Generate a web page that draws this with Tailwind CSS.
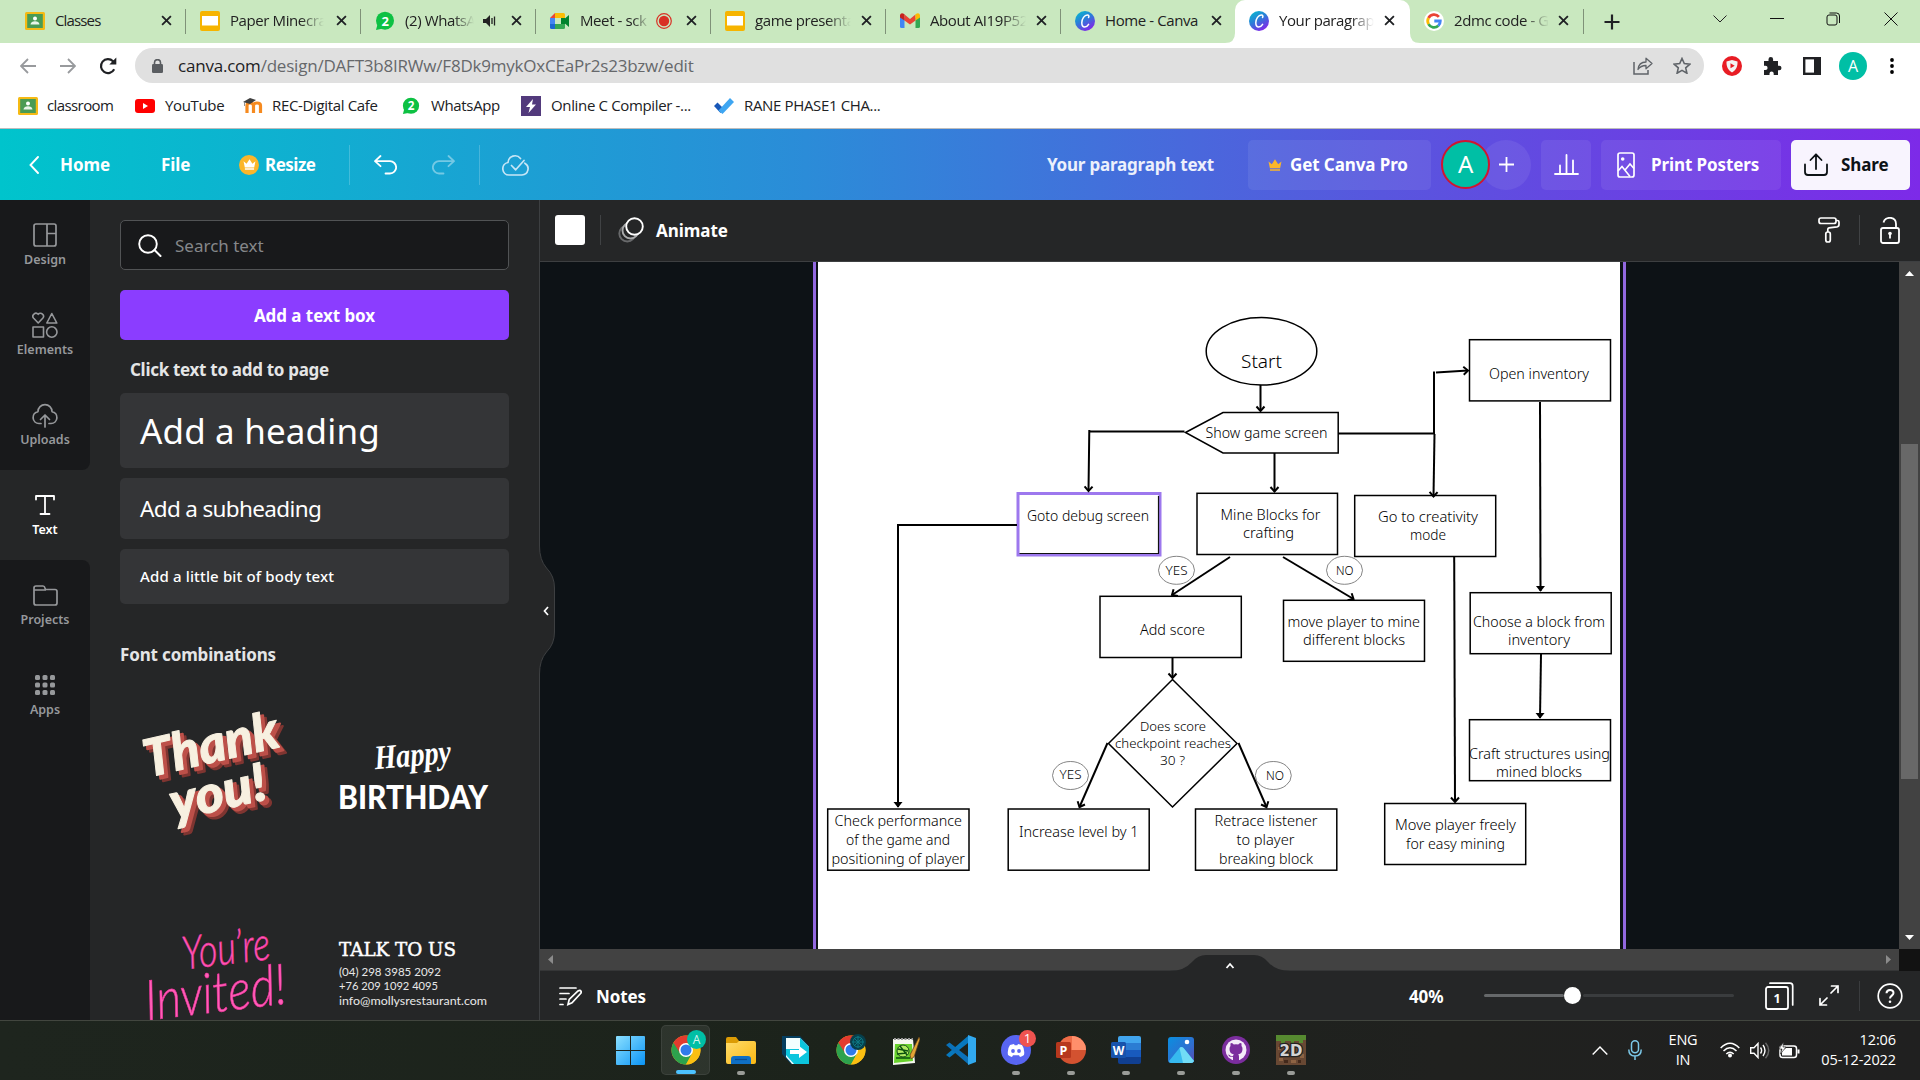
<!DOCTYPE html>
<html lang="en">
<head>
<meta charset="utf-8">
<title>Your paragraph text - Canva</title>
<script src="https://cdn.jsdelivr.net/npm/@tailwindcss/browser@4"></script>
</head>
<body class="w-[1920px] h-[1080px] overflow-hidden flex flex-col bg-[#0d1216] font-['Noto_Sans',sans-serif]">

<!-- Shared symbols -->
<svg class="absolute size-0">
  <defs>
    <linearGradient id="gCanva" x1="0" y1="0" x2="0.6" y2="1"><stop offset="0" stop-color="#00c4cc"/><stop offset=".5" stop-color="#2a7fd8"/><stop offset="1" stop-color="#7d2ae8"/></linearGradient>
    <linearGradient id="gWin" x1="0" y1="0" x2="1" y2="1"><stop offset="0" stop-color="#8be0ff"/><stop offset="1" stop-color="#0a94f5"/></linearGradient>
    <linearGradient id="gFold" x1="0" y1="0" x2="1" y2="1"><stop offset="0" stop-color="#ffdc6b"/><stop offset="1" stop-color="#fbb812"/></linearGradient>
    <linearGradient id="gPhoto" x1="0" y1="0" x2="1" y2="1"><stop offset="0" stop-color="#0a8fe0"/><stop offset=".6" stop-color="#2f6fd0"/><stop offset="1" stop-color="#5b48b0"/></linearGradient>
    <symbol id="close" viewBox="0 0 12 12"><path d="M1.2 1.2l9.600 9.600M10.800 1.200l-9.600 9.600" stroke="#1f2124" stroke-width="2"/></symbol>
    <symbol id="classroom" viewBox="0 0 20 20"><rect width="20" height="18" y="1" rx="1.500" fill="#f5ba14"/><rect x="2.200" y="3" width="15.600" height="14" fill="#4a9b54"/><circle cx="10" cy="7.500" r="2" fill="#fff"/><path d="M5.500 13.500c0-4.500 9-4.500 9 0z" fill="#e8f5e9"/></symbol>
    <symbol id="slides" viewBox="0 0 20 20"><rect width="20" height="20" rx="2" fill="#f6b400"/><rect x="2" y="5" width="16" height="9.500" fill="#fff"/></symbol>
    <symbol id="whatsapp" viewBox="0 0 20 20"><circle cx="10" cy="9.700" r="9" fill="#0dc143"/><path d="M1 19l1.600-6 4.400 4.700z" fill="#0dc143"/><text x="10" y="14.600" text-anchor="middle" font-family="Noto Sans" font-weight="700" font-size="13" fill="#fff">2</text></symbol>
    <symbol id="canva" viewBox="0 0 20 20"><circle cx="10" cy="10" r="10" fill="url(#gCanva)"/><path d="M13.500 6.500c.8-1.200.4-2.600-1.200-2.600C9.500 3.900 6.800 8 6.800 11.800c0 2.700 1.200 4.200 2.900 4.200 1.600 0 3-1.200 3.900-2.700" fill="none" stroke="#fff" stroke-width="1.500" stroke-linecap="round"/></symbol>
    <symbol id="crown" viewBox="0 0 14 12"><path d="M.5 2.500l3.300 2.800L7 .3l3.200 5 3.300-2.800-1.400 6.800H1.900zM2 10.200h10v1.500H2z" fill="currentColor"/></symbol>
    <symbol id="chrome" viewBox="0 0 30 30"><circle cx="15" cy="15" r="14.500" fill="#fbbf12"/><path d="M15 15L2.440 7.750A14.500 14.500 0 0 0 15 29.500l6.300-11z" fill="#2da24d"/><path d="M15 8.300h12.900A14.500 14.500 0 0 0 2.440 7.750L9.200 18.300z" fill="#e33b2e"/><path d="M27.900 8.300A14.500 14.500 0 0 1 15 29.500l6-11z" fill="#fbbf12"/><circle cx="15" cy="15" r="7" fill="#fff"/><circle cx="15" cy="15" r="5.500" fill="#2f7bea"/></symbol>
  </defs>
</svg>

<!-- Tab strip -->
<div class="h-[43px] shrink-0 bg-[#c9e8bf] flex items-stretch pl-[11px] [&>div]:pb-[2px] font-['Open_Sans',sans-serif] text-[15px] tracking-[-0.4px] text-[#222]">
  <div class="w-[175px] flex items-center pl-[14px] relative"><svg class="size-5"><use href="#classroom"/></svg><span class="ml-[10px] w-[94px] whitespace-nowrap tracking-[-0.85px]">Classes</span><svg class="ml-[12px] size-[11px]"><use href="#close"/></svg><i class="absolute right-0 top-[9px] w-px h-[25px] bg-[#7f9178]"></i></div>
  <div class="w-[175px] flex items-center pl-[14px] relative"><svg class="size-5"><use href="#slides"/></svg><span class="ml-[10px] w-[94px] whitespace-nowrap [mask-image:linear-gradient(to_right,black_75%,transparent)]">Paper Minecra</span><svg class="ml-[12px] size-[11px]"><use href="#close"/></svg><i class="absolute right-0 top-[9px] w-px h-[25px] bg-[#7f9178]"></i></div>
  <div class="w-[175px] flex items-center pl-[14px] relative"><svg class="size-5"><use href="#whatsapp"/></svg><span class="ml-[10px] w-[69px] whitespace-nowrap [mask-image:linear-gradient(to_right,black_70%,transparent)]">(2) WhatsA</span>
    <svg class="ml-[9px] w-[14px] h-[12px]" viewBox="0 0 14 12"><path d="M0 4h3l4-4v12L3 8H0z" fill="#222"/><path d="M9 3v6M11.500 1.500v9" stroke="#222" stroke-width="1.300"/></svg>
    <svg class="ml-[14px] size-[11px]"><use href="#close"/></svg><i class="absolute right-0 top-[9px] w-px h-[25px] bg-[#7f9178]"></i></div>
  <div class="w-[175px] flex items-center pl-[14px] relative"><svg class="w-5 h-[16px]" viewBox="0 0 20 16"><path d="M5 0v5H0z" fill="#ea4335"/><path d="M0 5h5v6H0z" fill="#4285f4"/><path d="M0 11h5v5H1.500Q0 16 0 14.500z" fill="#1967d2"/><path d="M5 0h8.500Q15 0 15 1.500V5H5z" fill="#fbbc04"/><path d="M5 11h10v3.500q0 1.500-1.500 1.500H5z" fill="#34a853"/><path d="M11 5h4v6h-4V8zM12 8l7-6v12z" fill="#00832d"/></svg><span class="ml-[10px] w-[70px] whitespace-nowrap [mask-image:linear-gradient(to_right,black_75%,transparent)]">Meet - sck</span>
    <svg class="ml-[6px] size-4" viewBox="0 0 16 16"><circle cx="8" cy="8" r="7.300" fill="none" stroke="#d93025" stroke-width="1.200"/><circle cx="8" cy="8" r="5.200" fill="#d93025"/></svg>
    <svg class="ml-[14px] size-[11px]"><use href="#close"/></svg><i class="absolute right-0 top-[9px] w-px h-[25px] bg-[#7f9178]"></i></div>
  <div class="w-[175px] flex items-center pl-[14px] relative"><svg class="size-5"><use href="#slides"/></svg><span class="ml-[10px] w-[96px] whitespace-nowrap [mask-image:linear-gradient(to_right,black_75%,transparent)]">game presenta</span><svg class="ml-[10px] size-[11px]"><use href="#close"/></svg><i class="absolute right-0 top-[9px] w-px h-[25px] bg-[#7f9178]"></i></div>
  <div class="w-[175px] flex items-center pl-[14px] relative"><svg class="w-5 h-[15px]" viewBox="0 0 20 15"><path d="M0 2v11.500Q0 15 1.500 15H4.500V5z" fill="#4285f4"/><path d="M20 2v11.500q0 1.500-1.500 1.500H15.500V5z" fill="#34a853"/><path d="M4.500 1.500L10 6l5.500-4.500v6L10 11.500 4.500 7.500z" fill="#ea4335"/><path d="M0 2Q1-1 4.500 1.300v6.200L0 4.500z" fill="#c5221f"/><path d="M20 2Q19-1 15.500 1.300v6.200L20 4.500z" fill="#fbbc04"/></svg><span class="ml-[10px] w-[96px] whitespace-nowrap [mask-image:linear-gradient(to_right,black_75%,transparent)]">About AI19P52</span><svg class="ml-[10px] size-[11px]"><use href="#close"/></svg><i class="absolute right-0 top-[9px] w-px h-[25px] bg-[#7f9178]"></i></div>
  <div class="w-[175px] flex items-center pl-[14px]"><svg class="size-5"><use href="#canva"/></svg><span class="ml-[10px] w-[96px] whitespace-nowrap">Home - Canva</span><svg class="ml-[10px] size-[11px]"><use href="#close"/></svg></div>
  <div class="w-[175px] flex items-center pl-[14px] relative bg-white rounded-t-[10px] -ml-px mr-px">
    <svg class="absolute -left-[10px] bottom-0 size-[10px]" viewBox="0 0 10 10"><path d="M10 0v10H0Q10 10 10 0z" fill="#fff"/></svg>
    <svg class="absolute -right-[10px] bottom-0 size-[10px]" viewBox="0 0 10 10"><path d="M0 0v10h10Q0 10 0 0z" fill="#fff"/></svg>
    <svg class="size-5"><use href="#canva"/></svg><span class="ml-[10px] w-[95px] whitespace-nowrap [mask-image:linear-gradient(to_right,black_75%,transparent)]">Your paragrap</span><svg class="ml-[10px] size-[11px]"><use href="#close"/></svg></div>
  <div class="w-[173px] flex items-center pl-[13px] relative"><svg class="size-5" viewBox="0 0 20 20"><circle cx="10" cy="10" r="10" fill="#fff"/><g fill="none" stroke-width="2.800"><path d="M14.900 5.800A6.300 6.300 0 0 0 4.500 7" stroke="#ea4335"/><path d="M4.500 7a6.300 6.300 0 0 0 0 6.100" stroke="#fbbc05"/><path d="M4.500 13.100a6.300 6.300 0 0 0 9.800 1.600" stroke="#34a853"/><path d="M14.300 14.700A6.300 6.300 0 0 0 16.300 10H10.300" stroke="#4285f4"/></g></svg><span class="ml-[10px] w-[95px] whitespace-nowrap [mask-image:linear-gradient(to_right,black_75%,transparent)]">2dmc code - G</span><svg class="ml-[9px] size-[11px]"><use href="#close"/></svg><i class="absolute right-0 top-[9px] w-px h-[25px] bg-[#7f9178]"></i></div>
  <svg class="ml-[20px] w-4 self-center h-4" viewBox="0 0 16 16"><path d="M8 .5v15M.5 8h15" stroke="#202124" stroke-width="2.200"/></svg>
  <svg class="ml-[93px] w-[14px] h-[8px] mt-[15px]" viewBox="0 0 14 8"><path d="M.5.5L7 7l6.500-6.500" fill="none" stroke="#222"/></svg>
  <svg class="ml-[43px] w-[14px] h-[2px] mt-[18px]"><path d="M0 .5h14" stroke="#111"/></svg>
  <svg class="ml-[42px] w-[15px] h-[14px] mt-[12px]" viewBox="0 0 15 14"><rect x="1" y="3" width="10" height="10" rx="2" fill="none" stroke="#111"/><path d="M3.500 1h7q3 0 3 3v7" fill="none" stroke="#111"/></svg>
  <svg class="ml-[43px] w-[14px] h-[14px] mt-[12px]" viewBox="0 0 14 14"><path d="M.5.5l13 13M13.500.5l-13 13" stroke="#111"/></svg>
</div>

<!-- Address row -->
<div class="h-[45px] shrink-0 bg-white flex items-center pl-5 font-['Open_Sans',sans-serif]">
  <svg class="w-4 h-4" viewBox="0 0 16 16"><path d="M16 8H1.500M8 1L1 8l7 7" fill="none" stroke="#989a9d" stroke-width="1.800"/></svg>
  <svg class="ml-6 w-4 h-4" viewBox="0 0 16 16"><path d="M0 8h14.500M8 1l7 7-7 7" fill="none" stroke="#989a9d" stroke-width="1.800"/></svg>
  <svg class="ml-[23px] w-[18px] h-[18px]" viewBox="0 0 18 18"><path d="M15.200 12.300A7 7 0 1 1 14 4.200l2 2" fill="none" stroke="#202124" stroke-width="2.200"/><path d="M17.300.6v7h-7z" fill="#202124"/></svg>
  <div class="ml-[18px] w-[1569px] h-[35px] rounded-full bg-[#e0e0e0] flex items-center pl-[17px]">
    <svg class="w-[11px] h-[14px]" viewBox="0 0 11 14"><rect y="5" width="11" height="9" rx="1.300" fill="#5a5d61"/><path d="M2.500 6V3.600a3 3 0 0 1 6 0V6" fill="none" stroke="#5a5d61" stroke-width="1.600"/></svg>
    <span class="ml-[15px] w-[1455px] text-[17px] tracking-[-0.21px] whitespace-nowrap text-[#66686b]"><span class="text-[#202124]">canva.com</span>/design/DAFT3b8IRWw/F8Dk9mykOxCEaPr2s23bzw/edit</span>
    <svg class="w-5 h-[18px] shrink-0" viewBox="0 0 20 18"><path d="M1 5v12h14v-4" fill="none" stroke="#5f6368" stroke-width="1.500"/><path d="M5 12.500c.5-5 3.500-7.500 8-7.500V1.200l6 5.300-6 5.300V8.500c-3.500 0-6 1-8 4z" fill="none" stroke="#5f6368" stroke-width="1.300" stroke-linejoin="round"/></svg>
    <svg class="ml-5 w-[18px] h-[17px] shrink-0" viewBox="0 0 18 17"><path d="M9 1.500l2.300 5.100 5.600.5-4.200 3.700 1.200 5.400L9 13.400l-4.900 2.800 1.200-5.400L1.100 7.100l5.600-.5z" fill="none" stroke="#5f6368" stroke-width="1.600"/></svg>
  </div>
  <svg class="ml-[18px] size-5" viewBox="0 0 20 20"><circle cx="10" cy="10" r="10" fill="#e81c24"/><path d="M10 4l5.500 1.500c.3 5-1.500 8.500-5.500 11-4-2.500-5.800-6-5.500-11z" fill="#f3f3f3"/><path d="M8.500 7.300l4.200 2.500-4.200 2.500z" fill="#e81c24"/></svg>
  <svg class="ml-[21px] w-[19px] h-[19px]" viewBox="0 0 19 19"><path d="M1 5h4.500V3.200a2.300 2.300 0 0 1 4.600 0V5H15v4.700h1.200a2.300 2.300 0 0 1 0 4.600H15V19h-4.300v-1.500a2 2 0 0 0-4.200 0V19H1v-5h1.500a2 2 0 0 0 0-4.200H1z" fill="#202124"/></svg>
  <svg class="ml-[21px] w-[18px] h-[18px]" viewBox="0 0 18 18"><rect x="1.200" y="1.200" width="15.600" height="15.600" fill="#fff" stroke="#202124" stroke-width="2.400"/><path d="M11 0h7v18h-7z" fill="#202124"/></svg>
  <span class="ml-[18px] size-[28px] rounded-full bg-[#00bfa5] text-white text-[16px] flex items-center justify-center">A</span>
  <svg class="ml-[23px] w-1 h-4" viewBox="0 0 4 16"><circle cx="2" cy="2" r="1.900"/><circle cx="2" cy="8" r="1.900"/><circle cx="2" cy="14" r="1.900"/></svg>
</div>

<!-- Bookmarks -->
<div class="h-[41px] shrink-0 bg-white border-b border-[#bdbdbd] flex items-center pl-[18px] pb-[5px] font-['Open_Sans',sans-serif] text-[15px] tracking-[-0.35px] text-[#202124] whitespace-nowrap">
  <svg class="size-5"><use href="#classroom"/></svg><span class="ml-[9px] w-[88px] tracking-[-0.6px]">classroom</span>
  <svg class="w-5 h-[14px]" viewBox="0 0 20 14"><rect width="20" height="14" rx="3" fill="#f00"/><path d="M8 4l5 3-5 3z" fill="#fff"/></svg><span class="ml-[10px] w-[78px]">YouTube</span>
  <svg class="size-5" viewBox="0 0 20 20"><path d="M4 17V9.500q0-2.500 3-2.500t3.500 2.500V17M10.500 17V9.500q0-2.500 3.500-2.500t3.500 2.500V17" fill="none" stroke="#f68a1f" stroke-width="3.200"/><path d="M0 6l7-4 6 2-6 4z" fill="#3f3f3f"/><path d="M1.500 6v4" stroke="#777" stroke-width=".8"/></svg><span class="ml-[9px] w-[130px]">REC-Digital Cafe</span>
  <svg class="size-[18px]" viewBox="0 0 20 20"><use href="#whatsapp"/></svg><span class="ml-[11px] w-[90px]">WhatsApp</span>
  <svg class="size-5" viewBox="0 0 20 20"><path d="M0 0h20v20H0z" fill="#523a7c"/><path d="M12 3L5 11h4l-1.500 6L15 8.500h-4z" fill="#fff"/></svg><span class="ml-[10px] w-[163px]">Online C Compiler -...</span>
  <svg class="w-5 h-4" viewBox="0 0 20 16"><path d="M0 8l3.500-3.500 6 6L6.500 15z" fill="#1857b8"/><path d="M4.500 12.500L16 0l4 4L8.500 16z" fill="#3ea6f2"/></svg><span class="ml-[10px]">RANE PHASE1 CHA...</span>
</div>

<!-- Editor header -->
<div class="h-[71px] shrink-0 bg-[linear-gradient(90deg,#00c4cc,#2b8cd8_42%,#5856de_72%,#7d2ae8)] flex items-center pl-[29px] text-white font-bold text-[17px] tracking-[-0.1px] whitespace-nowrap [&_span]:pt-px">
  <svg class="w-[10px] h-[18px]" viewBox="0 0 10 18"><path d="M9 1L1.500 9 9 17" fill="none" stroke="#fff" stroke-width="1.900" stroke-linecap="round"/></svg>
  <span class="ml-[21px] w-[101px]">Home</span>
  <span class="w-[78px]">File</span>
  <i class="size-5 rounded-full bg-[#fbb62a] flex items-center justify-center"><svg class="w-[13px] h-[11px]"><use href="#crown"/></svg></i>
  <span class="ml-[6px] w-[83px] tracking-[-0.5px]">Resize</span>
  <i class="w-px h-10 bg-white/20 ml-px"></i>
  <svg class="ml-[24px] w-[23px] h-[20px]" viewBox="0 0 23 20"><path d="M6.500 1L1 6.200l5.500 5M1.500 6.200H16a6 6 0 0 1 0 12.300h-4.500" fill="none" stroke="#fff" stroke-width="1.800" stroke-linecap="round" stroke-linejoin="round"/></svg>
  <svg class="ml-[35px] w-[23px] h-[20px] opacity-40" viewBox="0 0 23 20"><path d="M16.500 1L22 6.200l-5.500 5M21.500 6.200H7a6 6 0 0 0 0 12.300h4.500" fill="none" stroke="#fff" stroke-width="1.800" stroke-linecap="round" stroke-linejoin="round"/></svg>
  <i class="ml-[24px] w-px h-10 bg-white/20"></i>
  <svg class="ml-[22px] w-[27px] h-[22px]" viewBox="0 0 27 22"><path d="M18.500 4.500A7 7 0 0 0 6 8.500a6.300 6.300 0 0 0 1 12.500h13a6.300 6.300 0 0 0 2.800-11.800M9.500 11.500l4.200 4.300L22 6.500" fill="none" stroke="#c7e6f6" stroke-width="1.700" stroke-linecap="round" stroke-linejoin="round"/></svg>
  <span class="ml-[518px] w-[201px] tracking-[-0.2px] text-white/90">Your paragraph text</span>
  <div class="w-[183px] h-[50px] rounded-[5px] bg-white/7 flex items-center pl-[20px]"><svg class="w-[14px] h-[12px] text-[#fbb62a]"><use href="#crown"/></svg><span class="ml-[8px] tracking-[-0.1px]">Get Canva Pro</span></div>
  <div class="ml-[10px] w-[90px] flex">
    <b class="relative z-10 size-[49px] rounded-full border-2 border-[#d0152f] bg-[#00bfa5] text-[24px] font-normal flex items-center justify-center">A</b>
    <i class="-ml-[9px] size-[50px] rounded-full bg-white/7 flex items-center justify-center"><svg class="w-[15px] h-[15px]" viewBox="0 0 15 15"><path d="M7.500 0v15M0 7.500h15" stroke="#fff" stroke-width="1.800"/></svg></i>
  </div>
  <div class="ml-[10px] w-[50px] h-[50px] rounded-[5px] bg-white/7 flex items-center justify-center"><svg class="w-[25px] h-[21px]" viewBox="0 0 25 21"><path d="M1 20h23M6 19v-7.500M12.500 19V1M19 19V6.500" fill="none" stroke="#fff" stroke-width="1.800" stroke-linecap="round"/></svg></div>
  <div class="ml-[10px] w-[180px] h-[50px] rounded-[5px] bg-white/7 flex items-center pl-[16px]"><svg class="w-[18px] h-[26px]" viewBox="0 0 18 26"><rect x="1" y="1" width="16" height="24" rx="2" fill="none" stroke="#fff" stroke-width="1.700"/><circle cx="5.700" cy="7" r="1.800" fill="#fff"/><path d="M1 19l4-4.500 8 10M8 18l5-6 4 4.500" fill="none" stroke="#fff" stroke-width="1.600"/></svg><span class="ml-[16px] tracking-[-0.1px]">Print Posters</span></div>
  <div class="ml-[10px] w-[119px] h-[50px] rounded-[5px] bg-[#f8f4fe] text-[#0d1216] flex items-center pl-[13px]"><svg class="w-[24px] h-[23px]" viewBox="0 0 24 23"><path d="M1 11.500V19q0 3 3 3h16q3 0 3-3v-7.500M12 16V1.500M6.500 7L12 1.300 17.500 7" fill="none" stroke="#0d1216" stroke-width="1.800" stroke-linecap="round" stroke-linejoin="round"/></svg><span class="ml-[13px]">Share</span></div>
</div>

<!-- Editor body -->
<div class="h-[820px] shrink-0 flex relative">
  <!-- Rail -->
  <div class="w-[90px] bg-[#252627] flex flex-col text-[12.5px] font-semibold text-[#96989b] text-center">
    <div class="h-[270px] bg-[#18191b] rounded-br-[8px] flex flex-col">
      <div class="h-[90px] pt-[23px] flex flex-col items-center"><svg class="w-[24px] h-[24px]" viewBox="0 0 24 24"><rect x="1" y="1" width="22" height="22" rx="2" fill="none" stroke="#96989b" stroke-width="1.700"/><path d="M14 1v22M14 10.500h9" stroke="#96989b" stroke-width="1.700"/></svg><span class="mt-[4px]">Design</span></div>
      <div class="h-[90px] pt-[22px] flex flex-col items-center"><svg class="w-[26px] h-[26px]" viewBox="0 0 26 26"><g fill="none" stroke="#96989b" stroke-width="1.600" stroke-linejoin="round"><path d="M6.200 11L1.700 6.300a3 3 0 0 1 4.500-4 3 3 0 0 1 4.500 4z"/><path d="M19.800 1.500l5 9.500h-10z"/><rect x="1" y="15" width="10.500" height="10"/><circle cx="19.800" cy="20" r="5.200"/></g></svg><span class="mt-[3px]">Elements</span></div>
      <div class="h-[90px] pt-[23px] flex flex-col items-center"><svg class="w-[26px] h-[25px]" viewBox="0 0 26 25"><path d="M9 20.500H7A6 6 0 0 1 6 8.600a7 7 0 0 1 14 0 6 6 0 0 1-1 11.900h-2M13 24V12.500M8.500 16.500L13 12l4.500 4.500" fill="none" stroke="#96989b" stroke-width="1.700" stroke-linecap="round" stroke-linejoin="round"/></svg><span class="mt-[3px]">Uploads</span></div>
    </div>
    <div class="h-[90px] pt-[25px] flex flex-col items-center text-white"><svg class="w-[20px] h-[20px]" viewBox="0 0 20 20"><path d="M1 4.500V1h18v3.500M10 1v18M5.500 19h9" fill="none" stroke="#fff" stroke-width="1.800" stroke-linecap="round" stroke-linejoin="round"/></svg><span class="mt-[6px]">Text</span></div>
    <div class="h-[460px] bg-[#18191b] rounded-tr-[8px] flex flex-col">
      <div class="h-[90px] pt-[25px] flex flex-col items-center"><svg class="w-[25px] h-[21px]" viewBox="0 0 25 21"><path d="M1 18V3q0-2 2-2h7q1.500 0 2 2l.5 1.500H22q2 0 2 2V18q0 2-2 2H3q-2 0-2-2zM1 5h12" fill="none" stroke="#96989b" stroke-width="1.700"/></svg><span class="mt-[5px]">Projects</span></div>
      <div class="h-[90px] pt-[25px] flex flex-col items-center"><svg class="w-[20px] h-[20px]" viewBox="0 0 20 20" fill="#96989b"><rect width="5" height="5" rx="1.500"/><rect x="7.500" width="5" height="5" rx="1.500"/><rect x="15" width="5" height="5" rx="1.500"/><rect y="7.500" width="5" height="5" rx="1.500"/><rect x="7.500" y="7.500" width="5" height="5" rx="1.500"/><rect x="15" y="7.500" width="5" height="5" rx="1.500"/><rect y="15" width="5" height="5" rx="1.500"/><rect x="7.500" y="15" width="5" height="5" rx="1.500"/><rect x="15" y="15" width="5" height="5" rx="1.500"/></svg><span class="mt-[6px]">Apps</span></div>
    </div>
  </div>

  <!-- Text panel -->
  <div class="w-[450px] bg-[#252627] border-r border-[#3d3f41] flex flex-col pl-[30px] pr-[30px] pt-[20px] text-white whitespace-nowrap overflow-hidden">
    <div class="h-[50px] shrink-0 rounded-[5px] border border-[#515355] bg-[#18191b] flex items-center pl-[17px]"><svg class="w-[24px] h-[23px]" viewBox="0 0 24 23"><circle cx="10" cy="10" r="8.800" fill="none" stroke="#fff" stroke-width="1.900"/><path d="M16.500 16l6 6" stroke="#fff" stroke-width="2" stroke-linecap="round"/></svg><span class="ml-[13px] pt-px text-[17px] text-[#85878a]">Search text</span></div>
    <div class="mt-[20px] h-[50px] shrink-0 rounded-[5px] bg-[#8b3dff] flex items-center justify-center pt-px font-bold text-[17px] tracking-[-0.05px]">Add a text box</div>
    <div class="mt-[18px] h-[24px] shrink-0 pl-[10px] leading-[24px] font-bold text-[17px] tracking-[-0.3px] text-[#e4e5e6]">Click text to add to page</div>
    <div class="mt-[11px] h-[75px] shrink-0 rounded-[5px] bg-[#343537] flex items-center pl-[20px] pt-[2px] text-[35px] tracking-[0.15px]">Add a heading</div>
    <div class="mt-[10px] h-[61px] shrink-0 rounded-[5px] bg-[#343537] flex items-center pl-[20px] text-[22.5px] tracking-[-0.65px]">Add a subheading</div>
    <div class="mt-[10px] h-[55px] shrink-0 rounded-[5px] bg-[#343537] flex items-center pl-[20px] text-[15px] font-medium tracking-[0.15px]">Add a little bit of body text</div>
    <div class="mt-[39px] h-[24px] shrink-0 leading-[24px] font-bold text-[17px] tracking-[-0.15px] text-[#e4e5e6]">Font combinations</div>
    <div class="mt-[21px] shrink-0 flex">
      <svg class="w-[190px] h-[332px]" viewBox="120 688 190 332">
        <g transform="translate(2 2)" font-family="Lato" font-style="italic" font-weight="900" text-anchor="middle" stroke-linejoin="round">
          <g transform="rotate(-13 214 770)" fill="#7f3531" stroke="#7f3531" stroke-width="2"><text x="220" y="767" font-size="52" textLength="137" lengthAdjust="spacingAndGlyphs">Thank</text><text x="216" y="815" font-size="52" textLength="98" lengthAdjust="spacingAndGlyphs">you!</text></g>
          <g transform="rotate(-13 214 770)" fill="#bd5049" stroke="#bd5049" stroke-width="2"><text x="218" y="764" font-size="52" textLength="137" lengthAdjust="spacingAndGlyphs">Thank</text><text x="214" y="812" font-size="52" textLength="98" lengthAdjust="spacingAndGlyphs">you!</text></g>
          <g transform="rotate(-13 214 770)" fill="#f7f0e0" stroke="#f7f0e0" stroke-width="1"><text x="215" y="760" font-size="52" textLength="137" lengthAdjust="spacingAndGlyphs">Thank</text><text x="211" y="808" font-size="52" textLength="98" lengthAdjust="spacingAndGlyphs">you!</text></g>
        </g>
        <g font-family="Lato" font-style="italic" font-weight="300" fill="#ff5fb8" stroke="#f5339f" stroke-width=".7" text-anchor="middle"><g transform="rotate(-7 230 965)"><text x="228" y="964" font-size="46" textLength="88" lengthAdjust="spacingAndGlyphs">You’re</text><text x="212" y="1010" font-size="56" textLength="142" lengthAdjust="spacingAndGlyphs">Invited!</text></g></g>
      </svg>
      <svg class="w-[190px] h-[332px]" viewBox="310 688 190 332" fill="#fff">
        <text x="413" y="766" transform="rotate(-5 413 760)" text-anchor="middle" font-family="Liberation Serif" font-style="italic" font-weight="700" font-size="34" textLength="77" lengthAdjust="spacingAndGlyphs">Happy</text>
        <text x="338" y="809" font-family="Lato" font-weight="900" font-size="32" textLength="150" lengthAdjust="spacingAndGlyphs">BIRTHDAY</text>
        <text x="339" y="956" font-family="DejaVu Serif" font-size="19" font-weight="400" stroke="#fff" stroke-width=".5" textLength="117" lengthAdjust="spacingAndGlyphs">TALK TO US</text>
        <g font-family="Lato" font-size="12" fill="#e8e8e8"><text x="339" y="975.500" textLength="102" lengthAdjust="spacingAndGlyphs">(04) 298 3985 2092</text><text x="339" y="990" textLength="99" lengthAdjust="spacingAndGlyphs">+76 209 1092 4095</text><text x="339" y="1005" textLength="148" lengthAdjust="spacingAndGlyphs">info@mollysrestaurant.com</text></g>
      </svg>
    </div>
  </div>

  <!-- Work area -->
  <div class="w-[1380px] flex flex-col">
    <div class="h-[62px] shrink-0 bg-[#252627] border-b border-[#3d3f41] flex items-center pl-[15px] pb-px">
      <span class="size-[30px] rounded-[3px] bg-white"></span><i class="ml-[15px] w-px h-[30px] bg-[#404244]"></i>
      <svg class="ml-[17px] w-[26px] h-[26px]" viewBox="0 0 26 26" fill="none" stroke-width="1.900"><circle cx="9.300" cy="16.500" r="8" stroke="#68696b"/><circle cx="12.500" cy="13.500" r="8" fill="#252627" stroke="#a9aaab"/><circle cx="16.500" cy="9.500" r="8.300" fill="#252627" stroke="#fff"/></svg>
      <span class="ml-[12px] w-[1162px] pt-px text-white font-bold text-[17px] tracking-[-0.05px]">Animate</span>
      <svg class="w-[22px] h-[26px]" viewBox="0 0 22 26" fill="none" stroke="#fff" stroke-width="1.700"><rect x="1" y="1" width="17" height="5.500" rx="2"/><path d="M18 3.500h1.500q1.500 0 1.500 1.500v2.500q0 2-2 2.300l-8 1q-1.200.2-1.200 1.500V15"/><rect x="7.800" y="15" width="4.500" height="10" rx="2"/></svg>
      <i class="ml-[19px] w-px h-[30px] bg-[#404244]"></i>
      <svg class="ml-[20px] w-[20px] h-[27px]" viewBox="0 0 20 27" fill="none" stroke="#fff" stroke-width="1.800"><rect x="1" y="11" width="18" height="15" rx="2"/><path d="M3.500 5.500C5-1 16-1 16 7v4"/><circle cx="10" cy="16.500" r="1.800" fill="#fff" stroke="none"/><path d="M10 17v4.500"/></svg>
    </div>
    <div class="h-[687px] shrink-0 flex">
      <!-- Flowchart canvas -->
      <svg class="w-[1359px] h-[687px] bg-[#0d1216]" viewBox="540 262 1359 687">
        <defs>
          <marker id="ar" viewBox="-8 -6 10 12" markerWidth="10" markerHeight="12" markerUnits="userSpaceOnUse" orient="auto" refX="0" refY="0"><path d="M-4.500-4L0 0l-4.500 4" fill="none" stroke="#000" stroke-width="2"/></marker>
          <marker id="af" viewBox="-8 -6 10 12" markerWidth="10" markerHeight="12" markerUnits="userSpaceOnUse" orient="auto" refX="0" refY="0"><path d="M-5-4.500L.8 0-5 4.500z"/></marker>
        </defs>
        <path d="M813 262h3v687h-3zM1623 262h3v687h-3z" fill="#9268e0"/>
        <path d="M818 262h802v687H818z" fill="#fff"/>
        <g fill="none" stroke="#000" stroke-width="1.500">
          <ellipse cx="1261.500" cy="351.300" rx="55.300" ry="33.700"/>
          <path d="M1185.500 432.500L1223 412.500h115.200V453H1223z"/>
          <rect x="1197" y="493.300" width="140.500" height="61.200"/>
          <rect x="1469.500" y="339.700" width="141" height="61.200"/>
          <rect x="1354.700" y="495.500" width="141" height="61"/>
          <rect x="1100" y="596.300" width="141.300" height="61.200"/>
          <rect x="1283.500" y="600.300" width="141" height="61"/>
          <rect x="1470.200" y="592.700" width="141" height="61"/>
          <rect x="1469.500" y="719.700" width="141" height="61"/>
          <rect x="1384.700" y="803.500" width="141" height="61"/>
          <rect x="827.700" y="809" width="141.300" height="61.200"/>
          <rect x="1008.200" y="809" width="141" height="61.200"/>
          <rect x="1195.500" y="809" width="141.300" height="61.200"/>
          <path d="M1172.500 679.500l64.500 64-64.500 63.500-64-63.500z"/>
        </g>
        <rect x="1018" y="493.500" width="142" height="61.500" fill="none" stroke="#9d78ee" stroke-width="3"/>
        <path d="M1158.500 496v57.500h-139" fill="none" stroke="#111" stroke-width="1.200"/>
        <g fill="none" stroke="#666" stroke-width=".8"><ellipse cx="1176.500" cy="570.300" rx="18" ry="14"/><ellipse cx="1344.500" cy="570.300" rx="18" ry="14"/><ellipse cx="1070.500" cy="775.500" rx="18" ry="14"/><ellipse cx="1273.300" cy="775.500" rx="18" ry="14"/></g>
        <g fill="none" stroke="#000" stroke-width="2">
          <path d="M1260.500 385v26" marker-end="url(#ar)"/>
          <path d="M1184.500 431.500H1089.300V430L1088.500 491" marker-end="url(#ar)"/>
          <path d="M1274.500 453v38.500" marker-end="url(#ar)"/>
          <path d="M1017 525H898v282" marker-end="url(#af)"/>
          <path d="M1338 433.500h96M1434 434V371.500"/>
          <path d="M1436 372.500l32-2" marker-end="url(#ar)"/>
          <path d="M1434.500 434l-1 62.500" marker-end="url(#ar)"/>
          <path d="M1540 402l.5 189" marker-end="url(#af)"/>
          <path d="M1454.200 556l.8 246" marker-end="url(#ar)"/>
          <path d="M1230 557l-58 38" marker-end="url(#ar)"/>
          <path d="M1283 557l70.500 42" marker-end="url(#ar)"/>
          <path d="M1172.500 658v20" marker-end="url(#ar)"/>
          <path d="M1107.500 743l-28 64" marker-end="url(#ar)"/>
          <path d="M1238.500 743l28 64" marker-end="url(#ar)"/>
          <path d="M1541 654l-1 64" marker-end="url(#af)"/>
        </g>
        <g font-family="Noto Sans" font-weight="300" font-size="14.500" fill="#000">
          <text x="1241" y="368" font-size="18" textLength="41" lengthAdjust="spacingAndGlyphs">Start</text>
          <text x="1205.500" y="438" textLength="122" lengthAdjust="spacingAndGlyphs">Show game screen</text>
          <text x="1027" y="521" textLength="122" lengthAdjust="spacingAndGlyphs">Goto debug screen</text>
          <text x="1220.500" y="520" textLength="100" lengthAdjust="spacingAndGlyphs">Mine Blocks for</text>
          <text x="1243" y="538" textLength="51" lengthAdjust="spacingAndGlyphs">crafting</text>
          <text x="1378" y="522" textLength="100" lengthAdjust="spacingAndGlyphs">Go to creativity</text>
          <text x="1410" y="540" textLength="36" lengthAdjust="spacingAndGlyphs">mode</text>
          <text x="1489" y="379" textLength="100" lengthAdjust="spacingAndGlyphs">Open inventory</text>
          <text x="1140" y="635" textLength="65" lengthAdjust="spacingAndGlyphs">Add score</text>
          <text x="1287.500" y="627" textLength="132.500" lengthAdjust="spacingAndGlyphs">move player to mine</text>
          <text x="1303" y="645" textLength="102" lengthAdjust="spacingAndGlyphs">different blocks</text>
          <text x="1473" y="627" textLength="132" lengthAdjust="spacingAndGlyphs">Choose a block from</text>
          <text x="1508" y="645" textLength="62" lengthAdjust="spacingAndGlyphs">inventory</text>
          <text x="1469" y="759" textLength="141" lengthAdjust="spacingAndGlyphs">Craft structures using</text>
          <text x="1496" y="777" textLength="86" lengthAdjust="spacingAndGlyphs">mined blocks</text>
          <text x="1395" y="830" textLength="121" lengthAdjust="spacingAndGlyphs">Move player freely</text>
          <text x="1406" y="849" textLength="99" lengthAdjust="spacingAndGlyphs">for easy mining</text>
          <text x="834.500" y="826" textLength="127.500" lengthAdjust="spacingAndGlyphs">Check performance</text>
          <text x="846" y="845" textLength="104" lengthAdjust="spacingAndGlyphs">of the game and</text>
          <text x="831.500" y="864" textLength="133.500" lengthAdjust="spacingAndGlyphs">positioning of player</text>
          <text x="1019" y="837" textLength="119.500" lengthAdjust="spacingAndGlyphs">Increase level by 1</text>
          <text x="1214.500" y="826" textLength="103" lengthAdjust="spacingAndGlyphs">Retrace listener</text>
          <text x="1236.500" y="845" textLength="58" lengthAdjust="spacingAndGlyphs">to player</text>
          <text x="1219" y="864" textLength="94" lengthAdjust="spacingAndGlyphs">breaking block</text>
          <g font-size="13.300">
            <text x="1140" y="731" textLength="66" lengthAdjust="spacingAndGlyphs">Does score</text>
            <text x="1115" y="748" textLength="116" lengthAdjust="spacingAndGlyphs">checkpoint reaches</text>
            <text x="1160" y="765" textLength="25" lengthAdjust="spacingAndGlyphs">30 ?</text>
          </g>
          <g font-size="12.500">
            <text x="1165.500" y="574.500" textLength="22" lengthAdjust="spacingAndGlyphs">YES</text>
            <text x="1336" y="574.500" textLength="17.500" lengthAdjust="spacingAndGlyphs">NO</text>
            <text x="1059.500" y="779" textLength="22" lengthAdjust="spacingAndGlyphs">YES</text>
            <text x="1266" y="779.500" textLength="18" lengthAdjust="spacingAndGlyphs">NO</text>
          </g>
        </g>
      </svg>
      <div class="w-[21px] bg-[#424242] flex flex-col items-center justify-between pt-[9px] pb-[9px]">
        <svg class="w-[9px] h-[5px]" viewBox="0 0 9 5"><path d="M0 5l4.500-5L9 5z" fill="#fff"/></svg>
        <div class="w-[17px] h-[335px] mt-[24px] mb-[12px] bg-[#686868]"></div>
        <svg class="w-[9px] h-[5px]" viewBox="0 0 9 5"><path d="M0 0l4.500 5L9 0z" fill="#fff"/></svg>
      </div>
    </div>
    <div class="h-[22px] shrink-0 flex">
      <div class="w-[1359px] bg-[#424242] flex items-center pl-[8px] pr-[8px] relative border-b border-[#353637]">
        <svg class="w-[5px] h-[9px]" viewBox="0 0 5 9"><path d="M5 0v9L0 4.500z" fill="#8b8b8b"/></svg>
        <svg class="ml-[617px] w-[120px] h-[16px] self-end -mb-px" viewBox="0 0 120 16"><path d="M0 16q14 0 22-9Q28 0 36 0h48q8 0 14 7 8 9 22 9z" fill="#252627"/><path d="M56.500 13l3.500-4 3.500 4" fill="none" stroke="#fff" stroke-width="1.800"/></svg>
        <svg class="ml-auto w-[5px] h-[9px]" viewBox="0 0 5 9"><path d="M0 0v9l5-4.500z" fill="#8b8b8b"/></svg>
      </div>
      <div class="w-[21px] bg-[#121212]"></div>
    </div>
    <div class="h-[49px] shrink-0 bg-[#252627] flex items-center pl-[19px] text-white font-bold text-[17px] tracking-[-0.1px]">
      <svg class="w-[23px] h-[20px]" viewBox="0 0 23 20" fill="none" stroke="#fff" stroke-width="1.700" stroke-linecap="round"><path d="M1 2h16M1 7.500h9M1 13h6M1 18.500h3M9 18.500l1.200-5L19 5q2-1.500 3 .2.600 1.200-.4 2.300L13 16.800z"/></svg>
      <span class="ml-[14px] w-[813px] pt-[2px]">Notes</span>
      <span class="w-[75px] pt-[2px]">40%</span>
      <div class="w-[250px] h-[17px] flex items-center"><i class="w-[80px] h-[3px] rounded bg-[#66686a]"></i><i class="size-[17px] rounded-full bg-white"></i><i class="ml-[2px] w-[151px] h-[3px] rounded bg-[#3a3c3e]"></i></div>
      <svg class="ml-[31px] w-[29px] h-[28px]" viewBox="0 0 29 28"><rect x="1" y="5" width="22" height="22" rx="2" fill="none" stroke="#fff" stroke-width="1.800"/><path d="M5 1.200h20q2.700 0 2.700 2.700V23" fill="none" stroke="#fff" stroke-width="1.700" stroke-linecap="round"/><text x="12" y="20.500" font-family="Noto Sans" font-weight="700" font-size="12.500" fill="#fff" text-anchor="middle">1</text></svg>
      <svg class="ml-[25px] w-[20px] h-[21px]" viewBox="0 0 20 21"><path d="M12.500 1H19v6.500M19 1l-7 7M1 13.500V20h6.500M1 20l7-7" fill="none" stroke="#fff" stroke-width="1.700" stroke-linecap="round"/></svg>
      <i class="ml-[20px] w-px h-[30px] bg-[#3a3c3e]"></i>
      <svg class="ml-[17px] w-[26px] h-[26px]" viewBox="0 0 26 26"><circle cx="13" cy="13" r="11.800" fill="none" stroke="#fff" stroke-width="1.700"/><path d="M9.500 10.300c0-4.500 7-4.500 7-.3 0 2.600-3.500 2.700-3.500 5.500" fill="none" stroke="#fff" stroke-width="2"/><circle cx="13" cy="18.700" r="1.300" fill="#fff"/></svg>
    </div>
  </div>

  <!-- Panel collapse handle -->
  <svg class="absolute left-[538px] top-[346px] w-[18px] h-[128px]" viewBox="0 0 18 128"><path d="M0 0h1.500q0 14 7 22 8 8 8 20v44q0 12-8 20-7 8-7 22H0z" fill="#252627"/><path d="M1.500 0q0 14 7 22 8 8 8 20v44q0 12-8 20-7 8-7 22" fill="none" stroke="#3d3f41"/><path d="M10 61l-3.500 4 3.500 4" fill="none" stroke="#fff" stroke-width="1.700"/></svg>
</div>

<!-- Taskbar -->
<div class="h-[60px] shrink-0 border-t border-[#42463f] bg-[linear-gradient(90deg,#1e251e,#1c231b_45%,#20211f_75%,#202020)] flex items-start pl-[606px] pt-[4px] relative font-['Open_Sans',sans-serif]">
  <div class="w-[48px] mr-[7px] h-[50px] flex items-center justify-center"><svg class="size-[29px]" viewBox="0 0 29 29" fill="url(#gWin)"><path d="M0 1q0-1 1-1h13v14H0zM15 0h13q1 0 1 1v13H15zM0 15h14v14H1q-1 0-1-1zM15 15h14v13q0 1-1 1H15z"/></svg></div>
  <div class="w-[49px] mr-[6px] h-[50px] rounded-[5px] bg-white/8 border border-white/7 flex items-center justify-center relative"><svg class="size-[30px]"><use href="#chrome"/></svg><span class="absolute top-[4px] right-[3px] size-[19px] rounded-full bg-[#00bfa5] text-[#d5f5f0] text-[12px] leading-[19px] text-center">A</span><i class="absolute bottom-0 w-5 h-1 rounded bg-[#4cc2ff]"></i></div>
  <div class="w-[49px] mr-[6px] h-[50px] flex items-center justify-center relative"><svg class="w-[30px] h-[27px]" viewBox="0 0 30 27"><path d="M0 2q0-2 2-2h8l3 4v6H0z" fill="#dc9c05"/><path d="M0 6h11l2-2h15q2 0 2 2v19q0 2-2 2H2q-2 0-2-2z" fill="url(#gFold)"/><path d="M5 27v-5q0-3 3-3h14q3 0 3 3v5z" fill="#0f6fc5"/><path d="M9 22.500h12" stroke="#0b4e92" stroke-width="1.200"/></svg><i class="absolute bottom-0 w-2 h-1 rounded bg-[#9a9c98]"></i></div>
  <div class="w-[50px] mr-[5px] h-[50px] flex items-center justify-center"><svg class="w-[28px] h-[29px]" viewBox="0 0 28 29"><path d="M0 0h18l9 10v18H9L0 18z" fill="#053e5f"/><path d="M4 2h14l9 9v17H10L4 21z" fill="#f3ffff"/><path d="M18 2l9 9v17H12l-8-9V13h14z" fill="#0cc5dd"/><path d="M8 14h9v-4l8 6-8 6v-4H8z" fill="#fff"/></svg></div>
  <div class="w-[50px] mr-[5px] h-[50px] flex items-center justify-center relative"><svg class="size-[30px]"><use href="#chrome"/></svg><svg class="absolute right-[10px] top-[9px] size-[16px]" viewBox="0 0 16 16"><circle cx="8" cy="8" r="8" fill="#063f4c"/><g fill="none" stroke="#0d7884"><circle cx="8" cy="8" r="5"/><path d="M8 2v12M2 8h12M4 4l8 8M12 4l-8 8"/></g></svg></div>
  <div class="w-[49px] mr-[6px] h-[50px] flex items-center justify-center"><svg class="w-[28px] h-[29px]" viewBox="0 0 28 29"><path d="M1 3h20l2 24-22 2z" fill="#f5f7ee"/><path d="M3 8h17l1 17-19 2z" fill="#68d22c"/><circle cx="11" cy="15" r="6" fill="#b2ec62" stroke="#194d1b"/><path d="M6 13l10 2M8 10l7 9M5 18l10-1M4 22h14" stroke="#0a500f" stroke-width="1.300"/><path d="M27 1l-9 18 1 4 3-2L28 3z" fill="#e4a436" stroke="#593c19" stroke-width=".7"/><path d="M2 3h19" stroke="#999" stroke-width="2" stroke-dasharray="2 1.500"/></svg></div>
  <div class="w-[50px] mr-[5px] h-[50px] flex items-center justify-center"><svg class="size-[30px]" viewBox="0 0 30 30"><path d="M22 1v7L3.500 22.500 0 20z" fill="#0879be"/><path d="M22 29v-7L3.500 7.500 0 10z" fill="#0b71b8"/><path d="M22 0l8 3v24l-8 3z" fill="#31a9ef"/></svg></div>
  <div class="w-[50px] mr-[5px] h-[50px] flex items-center justify-center relative"><svg class="size-[30px]" viewBox="0 0 30 30"><circle cx="15" cy="15" r="15" fill="#5865f2"/><path d="M7 20q-1-6 2-10l4-1 .7 1.200h2.600L17 9l4 1q3 4 2 10-2 1.700-4 2l-1-1.700h-6L11 22q-2-.3-4-2z" fill="#fff"/><circle cx="12" cy="16" r="1.900" fill="#5865f2"/><circle cx="18" cy="16" r="1.900" fill="#5865f2"/></svg><span class="absolute right-[5px] top-[5px] size-[17px] rounded-full bg-[#ef5350] text-white text-[13px] leading-[17px] text-center">1</span><i class="absolute bottom-0 w-2 h-1 rounded bg-[#9a9c98]"></i></div>
  <div class="w-[50px] mr-[5px] h-[50px] flex items-center justify-center relative"><svg class="w-[30px] h-[28px]" viewBox="0 0 30 28"><circle cx="16" cy="14" r="14" fill="#d35230"/><path d="M16 0a14 14 0 0 1 14 14H16z" fill="#ff8f6b"/><path d="M16 0a14 14 0 0 0-14 14h14z" fill="#ed6c47"/><rect y="6" width="15" height="16" rx="1.500" fill="#b7381d"/><text x="7.500" y="19" text-anchor="middle" font-family="Open Sans" font-weight="700" font-size="12.500" fill="#fff">P</text></svg><i class="absolute bottom-0 w-2 h-1 rounded bg-[#9a9c98]"></i></div>
  <div class="w-[50px] mr-[5px] h-[50px] flex items-center justify-center relative"><svg class="w-[30px] h-[28px]" viewBox="0 0 30 28"><path d="M7 2q0-2 2-2h19q2 0 2 2v5H7z" fill="#41a5ee"/><path d="M7 7h23v7H7z" fill="#2b7cd3"/><path d="M7 14h23v7H7z" fill="#185abd"/><path d="M7 21h23v5q0 2-2 2H9q-2 0-2-2z" fill="#103f91"/><rect y="6" width="15" height="16" rx="1.500" fill="#1753ac"/><text x="7.500" y="18.500" text-anchor="middle" font-family="Open Sans" font-weight="700" font-size="12" fill="#fff">W</text></svg><i class="absolute bottom-0 w-2 h-1 rounded bg-[#9a9c98]"></i></div>
  <div class="w-[50px] mr-[5px] h-[50px] flex items-center justify-center relative"><svg class="w-[26px] h-[26px]" viewBox="0 0 26 26"><rect width="26" height="26" rx="3" fill="url(#gPhoto)"/><path d="M1 24L11.500 11q2-2 4 0L26 24q-1 2-3 2H3q-2 0-2-2z" fill="#36b9ef"/><path d="M11.500 11q2-2 4 0L26 24q-1 2-3 2h-8z" fill="#71dcf6"/><circle cx="19" cy="5" r="2.300" fill="#fff"/></svg><i class="absolute bottom-0 w-2 h-1 rounded bg-[#9a9c98]"></i></div>
  <div class="w-[50px] mr-[5px] h-[50px] flex items-center justify-center relative"><svg class="size-[28px]" viewBox="0 0 28 28"><circle cx="14" cy="14" r="14" fill="#7b2d9e"/><circle cx="14" cy="14" r="10.500" fill="#f4eaf8"/><path d="M11 25v-4q-4 .5-5-2.500 2 .3 2.500 1.200.8 1 2.600.3 0-1 .7-1.700-4.300-.6-4.300-5.300 0-1.800 1-2.900-.3-1.500.3-3 1.600 0 3 1.300 2.200-.5 4.400 0 1.400-1.300 3-1.300.6 1.500.3 3 1 1.100 1 2.900 0 4.700-4.300 5.300.8.900.8 2.500V25z" fill="#7b2d9e"/></svg><i class="absolute bottom-0 w-2 h-1 rounded bg-[#9a9c98]"></i></div>
  <div class="w-[50px] h-[50px] flex items-center justify-center relative"><svg class="size-[30px]" viewBox="0 0 30 30"><path d="M0 0h30v30H0z" fill="#684833"/><path d="M0 0h30v5h-3v3h-4V6h-5v4h-3V6H9v3H5V6H0z" fill="#568a30"/><path d="M3 23h4v3H3zM15 25h5v3h-5zM24 19h4v4h-4zM2 12h3v3H2z" fill="#8d6343"/><path d="M8 25h4v3H8zM22 25h3v3h-3z" fill="#43291b"/><text x="15" y="21" text-anchor="middle" font-family="DejaVu Sans" font-weight="700" font-size="15" fill="#d4d4d4" stroke="#222" stroke-width="2.500" paint-order="stroke">2D</text></svg><i class="absolute bottom-0 w-2 h-1 rounded bg-[#9a9c98]"></i></div>

  <div class="ml-[276px] h-[50px] flex items-center text-white text-[14.5px] leading-[20px]">
    <svg class="w-[16px] h-[9px]" viewBox="0 0 16 9"><path d="M.7 8.500L8 1l7.300 7.500" fill="none" stroke="#fff" stroke-width="1.400"/></svg>
    <svg class="ml-[20px] w-[14px] h-[20px]" viewBox="0 0 14 20" fill="none" stroke="#7cc8e8" stroke-width="1.500"><rect x="3.500" y=".8" width="7" height="12" rx="3.500"/><path d="M.8 9.500q0 6.500 6.200 6.500t6.200-6.500M7 16v4"/></svg>
    <div class="ml-[21px] w-[40px] text-center tracking-[-0.2px]">ENG<br>IN</div>
    <svg class="ml-[17px] w-[20px] h-[16px]" viewBox="0 0 20 16" fill="none" stroke="#fff" stroke-width="1.500"><path d="M.7 6q9.300-9.500 18.600 0M3.500 9q6.500-6.500 13 0M6.300 12q3.700-3.500 7.400 0"/><circle cx="10" cy="13.500" r="2" fill="#fff" stroke="none"/></svg>
    <svg class="ml-[10px] w-[20px] h-[17px]" viewBox="0 0 20 17" fill="none" stroke="#fff" stroke-width="1.400"><path d="M.7 5.800H4l4-4.300v14L4 11.200H.7zM10.500 5.500q2.200 3 0 6M13 3q4 5.500 0 11"/><path d="M15.500.8q6.500 7.700 0 15.400" stroke="#666"/></svg>
    <svg class="ml-[9px] w-[21px] h-[17px]" viewBox="0 0 21 17"><rect x="1" y="4" width="16.500" height="11.500" rx="2.500" fill="none" stroke="#fff" stroke-width="1.500"/><path d="M18.500 7.500h2v4h-2zM3 9l4-3h6v7.500H3z" fill="#fff"/><path d="M4.500 0L0 7h3L1.500 12 7 5H4z" fill="#fff" stroke="#202020" stroke-width=".6"/></svg>
    <div class="w-[96px] text-right tracking-[-0.1px]">12:06<br>05-12-2022</div>
  </div>
</div>
</body>
</html>
